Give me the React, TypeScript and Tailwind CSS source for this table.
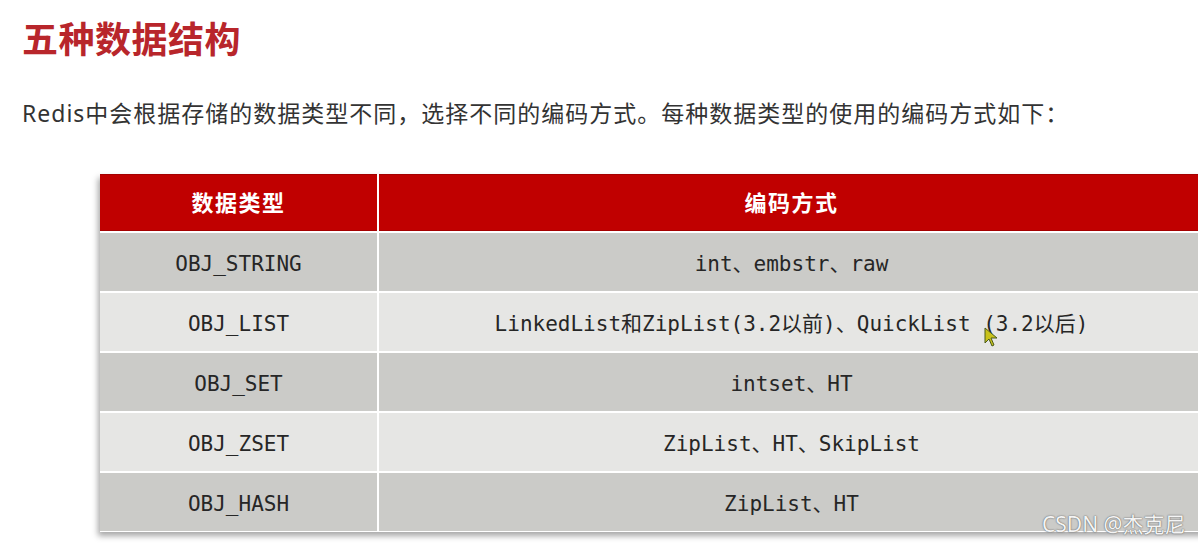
import React from "react";

const rows: [string, string][] = [
  ["OBJ_STRING", "int、embstr、raw"],
  ["OBJ_LIST", "LinkedList和ZipList(3.2以前)、QuickList (3.2以后)"],
  ["OBJ_SET", "intset、HT"],
  ["OBJ_ZSET", "ZipList、HT、SkipList"],
  ["OBJ_HASH", "ZipList、HT"],
];

const mono = { fontFamily: '"DejaVu Sans Mono", "Noto Sans CJK SC", monospace' };

export default function App() {
  return (
    <div
      className="relative w-[1198px] h-[549px] overflow-hidden bg-white"
      style={{ fontFamily: '"Noto Sans", "Noto Sans CJK SC", sans-serif' }}
    >
      <div className="pl-[22px] pt-[20px]">
        <h1 className="text-[36px] leading-[40px] font-bold text-[#b8262b] tracking-[0.5px]">
          五种数据结构
        </h1>
        <p className="mt-[37px] text-[23px] leading-[32px] text-[#333333] tracking-[1px]">
          Redis中会根据存储的数据类型不同，选择不同的编码方式。每种数据类型的使用的编码方式如下：
        </p>
      </div>

      <div className="ml-[100px] mt-[45px] w-[1110px] bg-white shadow-[-2px_4px_6px_rgba(0,0,0,0.35)] pb-[1px]">
        <div className="grid grid-cols-[277px_1fr] gap-x-[2px] gap-y-[2px]">
          <div className="h-[57px] bg-[#c00000] border-y border-[#a40000] flex items-center justify-center text-white font-bold text-[22px] tracking-[1.5px]">
            数据类型
          </div>
          <div className="h-[57px] bg-[#c00000] border-y border-[#a40000] flex items-center justify-center text-white font-bold text-[22px] tracking-[1.5px] pr-[6px]">
            编码方式
          </div>
          {rows.map(([a, b], i) => {
            const bg = i % 2 === 0 ? "bg-[#cbcbc8]" : "bg-[#e6e6e4]";
            return (
              <React.Fragment key={a}>
                <div
                  className={`h-[58px] ${bg} flex items-center justify-center pt-[5px] text-[21px] text-[#262626]`}
                  style={mono}
                >
                  {a}
                </div>
                <div
                  className={`h-[58px] ${bg} flex items-center justify-center pt-[5px] text-[21px] text-[#262626] pr-[6px]`}
                  style={mono}
                >
                  {b}
                </div>
              </React.Fragment>
            );
          })}
        </div>
      </div>

      <svg
        className="absolute left-[984px] top-[327px]"
        width="16"
        height="22"
        viewBox="0 0 16 22"
      >
        <path d="M1 1 L1 16 L5 12 L8 19 L10 18 L7 11 L13 11 Z" fill="#c9c21a" stroke="#4a5a1a" strokeWidth="1" />
      </svg>

      <div
        className="absolute left-[1042px] top-[511px] text-[21px] leading-[26px] text-[#f4f4f4]"
        style={{ textShadow: "0 0 1px #555, 0 0 2px #888" }}
      >
        CSDN @杰克尼
      </div>
    </div>
  );
}
